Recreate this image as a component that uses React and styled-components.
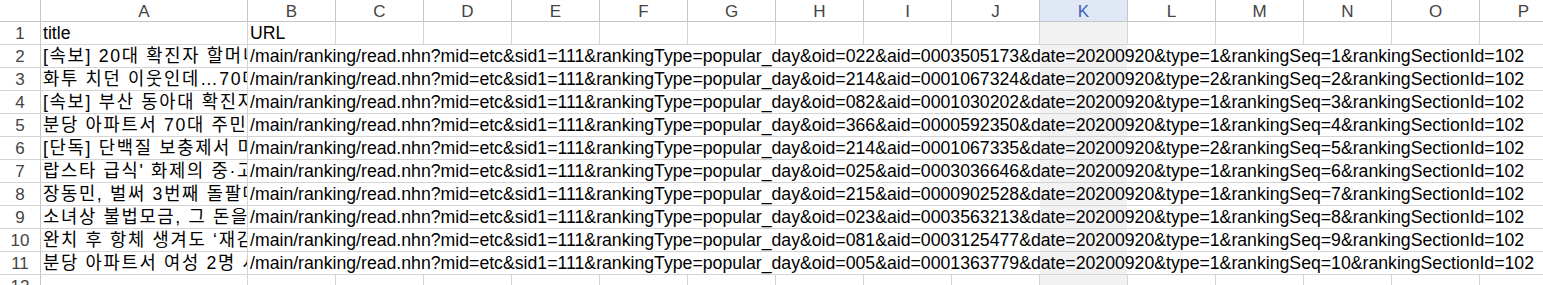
import React from "react";
import styled, { createGlobalStyle } from "styled-components";

const GlobalStyle = createGlobalStyle`
  html, body { margin: 0; padding: 0; background: #ffffff; }
  body { overflow: hidden; font-family: "Liberation Sans", "Noto Sans CJK KR", sans-serif; }
`;

const COLS = ["A","B","C","D","E","F","G","H","I","J","K","L","M","N","O","P"];
const ACTIVE = "K";
const GRID = "#d4d4d4";
const HEAD_LINE = "#c6c6c6";
const SHADE = "#f2f2f2";

const ROWS = [
  ["[속보] 20대 확진자 할머니 숨져", "022", "0003505173", 1, 1],
  ["화투 치던 이웃인데…70대 참변", "214", "0001067324", 2, 2],
  ["[속보] 부산 동아대 확진자 발생", "082", "0001030202", 1, 3],
  ["분당 아파트서 70대 주민 숨져", "366", "0000592350", 1, 4],
  ["[단독] 단백질 보충제서 마약 성분", "214", "0001067335", 2, 5],
  ["랍스타 급식' 화제의 중·고교 영양사", "025", "0003036646", 1, 6],
  ["장동민, 벌써 3번째 돌팔매 피해", "215", "0000902528", 1, 7],
  ["소녀상 불법모금, 그 돈을 어디에", "023", "0003563213", 1, 8],
  ["완치 후 항체 생겨도 ‘재감염’ 가능", "081", "0003125477", 1, 9],
  ["분당 아파트서 여성 2명 사망", "005", "0001363779", 1, 10],
];

const Page = styled.div`
  width: 1543px;
  height: 285px;
  overflow: hidden;
`;

const Sheet = styled.div`
  display: grid;
  grid-template-columns: 41px 207px repeat(15, 88px);
  grid-template-rows: 22px;
  grid-auto-rows: 23px;
  width: max-content;
  font-size: 17.68px;
  color: #000;
`;

const Corner = styled.div`
  box-sizing: border-box;
  border-right: 1px solid ${HEAD_LINE};
  border-bottom: 1px solid ${HEAD_LINE};
  background: #fff;
`;

const ColHead = styled.div`
  box-sizing: border-box;
  display: flex;
  align-items: center;
  justify-content: center;
  border-right: 1px solid ${HEAD_LINE};
  border-bottom: 1px solid ${HEAD_LINE};
  background: ${(p) => (p.$active ? "#e1e8f5" : "#ffffff")};
  color: ${(p) => (p.$active ? "#3d63b8" : "#444444")};
  font-size: 17px;
  line-height: 1;
  padding-top: 1px;
`;

const RowHead = styled.div`
  box-sizing: border-box;
  display: flex;
  align-items: center;
  justify-content: center;
  border-right: 1px solid ${HEAD_LINE};
  border-bottom: 1px solid ${GRID};
  color: #444444;
  font-size: 17px;
  line-height: 1;
`;

const Cell = styled.div`
  box-sizing: border-box;
  display: flex;
  align-items: center;
  padding: 1px 2px 0 2px;
  border-right: 1px solid ${GRID};
  border-bottom: 1px solid ${GRID};
  background: ${(p) => (p.$shaded ? SHADE : "transparent")};
  white-space: nowrap;
  overflow: hidden;
  line-height: 1;
  letter-spacing: ${(p) => (p.$wide ? "1.7px" : "normal")};
`;

const SpillCell = styled.div`
  box-sizing: border-box;
  grid-column: span 15;
  display: flex;
  align-items: center;
  padding: 1px 2px 0 2px;
  border-bottom: 1px solid ${GRID};
  background: linear-gradient(
    to right,
    transparent 792px,
    ${SHADE} 792px,
    ${SHADE} 879px,
    transparent 879px
  );
  white-space: nowrap;
  line-height: 1;
`;

const url = (oid, aid, type, seq) =>
  `/main/ranking/read.nhn?mid=etc&sid1=111&rankingType=popular_day&oid=${oid}&aid=${aid}&date=20200920&type=${type}&rankingSeq=${seq}&rankingSectionId=102`;

export default function App() {
  return (
    <Page>
      <GlobalStyle />
      <Sheet>
        <Corner />
        {COLS.map((c) => (
          <ColHead key={c} $active={c === ACTIVE}>{c}</ColHead>
        ))}

        <RowHead>1</RowHead>
        {COLS.map((c) => (
          <Cell key={c} $shaded={c === ACTIVE}>
            {c === "A" ? "title" : c === "B" ? "URL" : ""}
          </Cell>
        ))}

        {ROWS.map(([title, oid, aid, type, seq], i) => (
          <React.Fragment key={seq}>
            <RowHead>{i + 2}</RowHead>
            <Cell $wide>{title}</Cell>
            <SpillCell>{url(oid, aid, type, seq)}</SpillCell>
          </React.Fragment>
        ))}

        <RowHead>12</RowHead>
        {COLS.map((c) => (
          <Cell key={c} $shaded={c === ACTIVE} />
        ))}
      </Sheet>
    </Page>
  );
}
